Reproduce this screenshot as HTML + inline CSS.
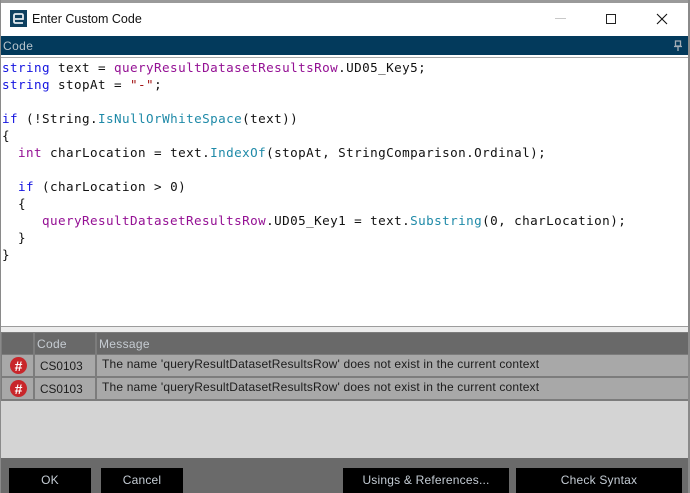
<!DOCTYPE html>
<html><head><meta charset="utf-8"><style>
*{box-sizing:border-box;margin:0;padding:0}
html,body{width:690px;height:493px;overflow:hidden;background:#fff}
body{position:relative;font-family:"Liberation Sans",sans-serif}
.a{position:absolute}
pre{position:absolute;left:2px;top:59px;font:12.6px/17px "DejaVu Sans Mono",monospace;letter-spacing:.42px;color:#111;white-space:pre}
.k{color:#1414e0}.m{color:#941094}.t{color:#1f8aa8}.s{color:#a31515}
.btn{position:absolute;top:468px;height:25px;background:#000;color:#c4ccd4;font-size:12px;text-align:center;line-height:25px;letter-spacing:.2px}
.ht{position:absolute;top:333px;height:21px;background:#696969;color:#c6ccd2;font-size:12px;line-height:23px;padding-left:3px;letter-spacing:.3px}
.c{position:absolute;background:#a8a8a8;color:#1c1c1c;font-size:11.8px;height:21px;line-height:21px}
.msg{font-size:12px;letter-spacing:.17px}
.ic{position:absolute;left:10px;width:17px;height:17px;border-radius:50%;background:#c8262a;color:#fff;font-weight:bold;font-size:14px;line-height:18px;text-align:center}
</style></head><body>
<div class="a" style="left:0;top:0;width:690px;height:3px;background:#9a9a9a"></div>
<div class="a" style="left:0;top:0;width:1px;height:493px;background:#8a8a8a"></div>
<div class="a" style="left:688px;top:0;width:2px;height:493px;background:#8a8a8a"></div>
<svg class="a" style="left:10px;top:10px" width="17" height="17" viewBox="0 0 17 17"><rect width="17" height="17" fill="#0f4160"/><path d="M4 9V5.500q0-1.500 1.500-1.500h6q1.500 0 1.500 1.500V9H5M4 9v2.500q0 1.500 1.500 1.500H13" fill="none" stroke="#e8eef2" stroke-width="1.800"/></svg>
<div class="a" style="left:32px;top:11px;font-size:12.5px;line-height:16px;color:#111">Enter Custom Code</div>
<div class="a" style="left:555px;top:18px;width:11px;height:1px;background:#c8c8c8"></div>
<div class="a" style="left:606px;top:14px;width:10px;height:10px;border:1px solid #222"></div>
<svg class="a" style="left:656px;top:13px" width="12" height="12" viewBox="0 0 12 12"><path d="M1 1L11 11M11 1L1 11" stroke="#111" stroke-width="1.100"/></svg>

<div class="a" style="left:1px;top:36px;width:687px;height:19px;background:#033a5c"></div>
<div class="a" style="left:3px;top:38px;font-size:12px;line-height:16px;color:#b8c4cc;letter-spacing:.4px">Code</div>
<svg class="a" style="left:673px;top:40px" width="10" height="12" viewBox="0 0 10 12"><path d="M2.500 1h5v5h-5zM1 6.500h8M5 7v4" fill="none" stroke="#a4aeb6" stroke-width="1.300"/></svg>
<div class="a" style="left:1px;top:57px;width:687px;height:1px;background:#a8a8a8"></div>

<pre><span class="k">string</span> text = <span class="m">queryResultDatasetResultsRow</span>.UD05_Key5;
<span class="k">string</span> stopAt = <span class="s">"-"</span>;

<span class="k">if</span> (!String.<span class="t">IsNullOrWhiteSpace</span>(text))
{
  <span class="m">int</span> charLocation = text.<span class="t">IndexOf</span>(stopAt, StringComparison.Ordinal);

  <span class="k">if</span> (charLocation &gt; 0)
  {
     <span class="m">queryResultDatasetResultsRow</span>.UD05_Key1 = text.<span class="t">Substring</span>(0, charLocation);
  }
}</pre>

<div class="a" style="left:1px;top:326px;width:687px;height:1px;background:#9c9c9c"></div>
<div class="a" style="left:1px;top:327px;width:687px;height:5px;background:#ececec"></div>

<div class="a" style="left:1px;top:332px;width:687px;height:69px;background:#7c7c7c"></div>
<div class="ht" style="left:2px;width:31px"></div>
<div class="ht" style="left:35px;width:60px;padding-left:2px">Code</div>
<div class="ht" style="left:97px;width:591px;padding-left:2px">Message</div>

<div class="c" style="left:2px;top:355px;width:31px"></div><div class="ic" style="top:357px">#</div>
<div class="c" style="left:35px;top:355px;width:60px;padding-left:5px;line-height:22px">CS0103</div>
<div class="c msg" style="left:97px;top:355px;width:591px;padding-left:5px;line-height:18px">The name 'queryResultDatasetResultsRow' does not exist in the current context</div>

<div class="c" style="left:2px;top:378px;width:31px"></div><div class="ic" style="top:380px">#</div>
<div class="c" style="left:35px;top:378px;width:60px;padding-left:5px;line-height:22px">CS0103</div>
<div class="c msg" style="left:97px;top:378px;width:591px;padding-left:5px;line-height:18px">The name 'queryResultDatasetResultsRow' does not exist in the current context</div>

<div class="a" style="left:1px;top:401px;width:687px;height:57px;background:#d4d4d4"></div>
<div class="a" style="left:1px;top:458px;width:687px;height:35px;background:#6a6a6a"></div>
<div class="btn" style="left:9px;width:82px">OK</div>
<div class="btn" style="left:101px;width:82px">Cancel</div>
<div class="btn" style="left:343px;width:166px">Usings &amp; References...</div>
<div class="btn" style="left:516px;width:166px">Check Syntax</div>
</body></html>
